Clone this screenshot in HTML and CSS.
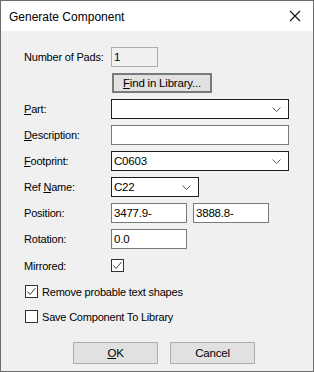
FILE: index.html
```html
<!DOCTYPE html>
<html lang="en">
<head>
  <meta charset="UTF-8">
  <title>Generate Component</title>
  <link rel="stylesheet" href="styles.css">
</head>
<body>

  <div class="window">
    <div class="titlebar">
      <span class="title">Generate Component</span>
      <svg class="close" width="12" height="12" viewBox="0 0 12 12">
        <path d="M1 1 L11 11 M11 1 L1 11" stroke="#111" stroke-width="1.1" fill="none"/>
      </svg>
    </div>

    <div class="content">
      <div class="form">
        <div class="row">
          <label>Number of Pads:</label>
          <div class="field readonly w46">1</div>
        </div>

        <div class="row">
          <span class="label"></span>
          <button class="btn find"><u>F</u>ind in Library...</button>
        </div>

        <div class="row">
          <label><u>P</u>art:</label>
          <div class="field combo w177">
            <span></span>
            <svg class="chev" width="9" height="5" viewBox="0 0 9 5"><path d="M0.5 0.5 L4.5 4.5 L8.5 0.5" stroke="#555" fill="none"/></svg>
          </div>
        </div>

        <div class="row">
          <label><u>D</u>escription:</label>
          <div class="field w177"></div>
        </div>

        <div class="row">
          <label><u>F</u>ootprint:</label>
          <div class="field combo w177">
            <span>C0603</span>
            <svg class="chev" width="9" height="5" viewBox="0 0 9 5"><path d="M0.5 0.5 L4.5 4.5 L8.5 0.5" stroke="#555" fill="none"/></svg>
          </div>
        </div>

        <div class="row">
          <label>Ref <u>N</u>ame:</label>
          <div class="field combo w87">
            <span>C22</span>
            <svg class="chev" width="9" height="5" viewBox="0 0 9 5"><path d="M0.5 0.5 L4.5 4.5 L8.5 0.5" stroke="#555" fill="none"/></svg>
          </div>
        </div>

        <div class="row">
          <label>Position:</label>
          <div class="field w75">3477.9-</div>
          <div class="field w75 second">3888.8-</div>
        </div>

        <div class="row">
          <label>Rotation:</label>
          <div class="field w75">0.0</div>
        </div>
      </div>

      <div class="row mirrored">
        <label>Mirrored:</label>
        <span class="check">
          <svg width="11" height="11" viewBox="0 0 11 11"><path d="M1.5 5.5 L4 8.5 L9.5 2" stroke="#444" stroke-width="1" fill="none"/></svg>
        </span>
      </div>

      <div class="checkrow remove">
        <span class="check">
          <svg width="11" height="11" viewBox="0 0 11 11"><path d="M1.5 5.5 L4 8.5 L9.5 2" stroke="#444" stroke-width="1" fill="none"/></svg>
        </span>
        <span>Remove probable text shapes</span>
      </div>

      <div class="checkrow save">
        <span class="check"></span>
        <span>Save Component To Library</span>
      </div>

      <div class="buttons">
        <button class="btn"><u>O</u>K</button>
        <button class="btn">Cancel</button>
      </div>
    </div>
  </div>

</body>
</html>
```

FILE: styles.css
```css
body {
  margin: 0;
  font-family: "Liberation Sans", Arial, sans-serif;
  font-size: 11px;
  letter-spacing: -0.2px;
  color: #000;
}

.window {
  width: 314px;
  height: 372px;
  box-sizing: border-box;
  border: 1px solid #6d6d6d;
  display: flex;
  flex-direction: column;
  background: #f0f0f0;
}

.titlebar {
  height: 30px;
  background: #fff;
  display: flex;
  align-items: center;
  justify-content: space-between;
  padding: 0 12px 0 8px;
  flex-shrink: 0;
}

.title {
  font-size: 12px;
  letter-spacing: 0;
  color: #000;
  padding-top: 1px;
}

.content {
  flex: 1;
  padding: 16px 0 0 23px;
}

.form {
  display: flex;
  flex-direction: column;
  gap: 6px;
}

.row {
  display: flex;
  align-items: center;
  height: 20px;
}

.row label,
.row .label {
  width: 87px;
  flex-shrink: 0;
  white-space: nowrap;
  color: #000;
}

.field {
  height: 20px;
  box-sizing: border-box;
  border: 1px solid #7a7a7a;
  background: #fff;
  display: flex;
  align-items: center;
  padding-left: 2px;
  font-size: 11.5px;
  color: #000;
}

.readonly {
  background: #f0f0f0;
  border-color: #adadad;
}

.combo {
  border-color: #1e1e1e;
  justify-content: space-between;
  padding-right: 7px;
}

.w46 { width: 47px; }
.w75 { width: 76px; }
.w87 { width: 88px; }
.w177 { width: 178px; }

.second {
  margin-left: 6px;
}

.btn {
  height: 22px;
  width: 85px;
  box-sizing: border-box;
  border: 1px solid #adadad;
  background: #e1e1e1;
  font-family: "Liberation Sans", Arial, sans-serif;
  font-size: 11.5px;
  letter-spacing: -0.2px;
  color: #000;
  padding: 0;
}

.find {
  height: 20px;
  width: 100px;
  margin-left: 1px;
  border: 2px solid #7a7a7a;
}

.mirrored {
  margin-top: 9px;
  height: 15px;
}

.check {
  width: 13px;
  height: 13px;
  box-sizing: border-box;
  border: 1px solid #333;
  background: #fff;
  display: flex;
  align-items: center;
  justify-content: center;
}

.checkrow {
  display: flex;
  align-items: center;
  gap: 4px;
  height: 15px;
  margin-left: 1px;
}

.remove {
  margin-top: 11px;
}

.save {
  margin-top: 10px;
}

.buttons {
  display: flex;
  gap: 12px;
  margin: 18px 0 0 49px;
}
```
